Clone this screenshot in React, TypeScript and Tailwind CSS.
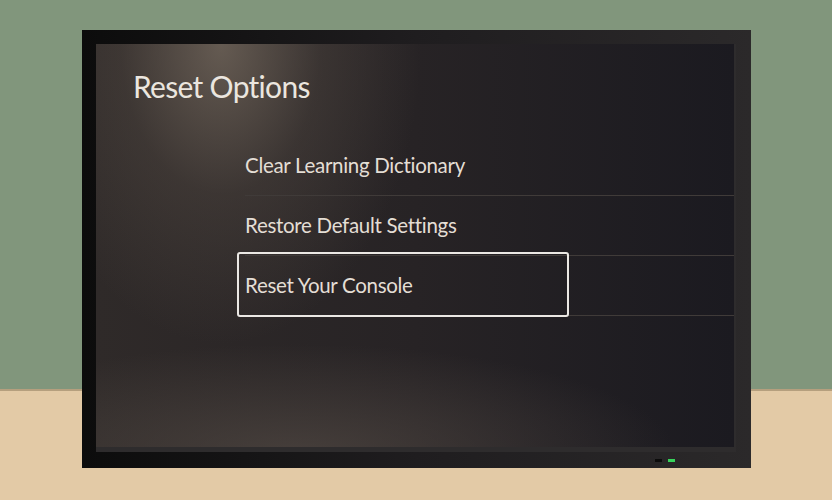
const items = ["Clear Learning Dictionary", "Restore Default Settings", "Reset Your Console"];

export default function App() {
  return (
    <div className="relative flex h-[500px] w-[832px] flex-col overflow-hidden bg-[#e3caa6] font-['Lato',sans-serif]">
      {/* wall + floor */}
      <div className="h-[391px] w-full border-b-2 border-[#b59f7e] bg-[#81967c]" />

      {/* TV */}
      <div className="absolute left-[82px] top-[30px] flex h-[438px] w-[669px] flex-col bg-gradient-to-r from-[#0c0c0c] via-[#1f1d1f] to-[#2b292a] px-[14px] pt-[14px]">
        <div className="relative h-[408px] w-[640px] overflow-hidden border-r-2 border-b-[5px] border-[#2e2c2d] bg-gradient-to-r from-[#2f2a29] via-[#272325] via-50% to-[#1b1a20]">
          {/* spotlight glow */}
          <div className="pointer-events-none absolute inset-0 bg-[radial-gradient(ellipse_200px_300px_at_125px_0px,rgba(120,108,96,0.75),rgba(90,80,72,0.35)_50%,transparent_100%)]" />
          <div className="pointer-events-none absolute inset-0 bg-[radial-gradient(ellipse_380px_110px_at_200px_410px,rgba(85,76,70,0.65),transparent_100%)]" />

          <div className="relative flex flex-col">
            <h1 className="pl-[37px] pt-[22px] text-[30px] leading-[40px] font-normal tracking-[-0.7px] text-[#ebe6df]">
              Reset Options
            </h1>
            <ul className="mt-[30px] flex flex-col pl-[149px]">
              {items.map((label, i) => (
                <li key={label} className="relative h-[60px] border-b border-[#403b39]">
                  {i === items.length - 1 && (
                    <div className="absolute -left-[8px] -top-[4px] h-[65px] w-[332px] rounded-[3px] border-2 border-[#ebe8e4]" />
                  )}
                  <span className="flex h-full items-center text-[20.5px] tracking-[-0.3px] text-[#e4ded5]">
                    {label}
                  </span>
                </li>
              ))}
            </ul>
          </div>
        </div>
        <div className="flex flex-1 items-center justify-end gap-[6px] pr-[62px]">
          <span className="h-[3px] w-[7px] bg-[#0b0b0b]" />
          <span className="h-[3px] w-[7px] bg-[#37d35b]" />
        </div>
      </div>
    </div>
  );
}
